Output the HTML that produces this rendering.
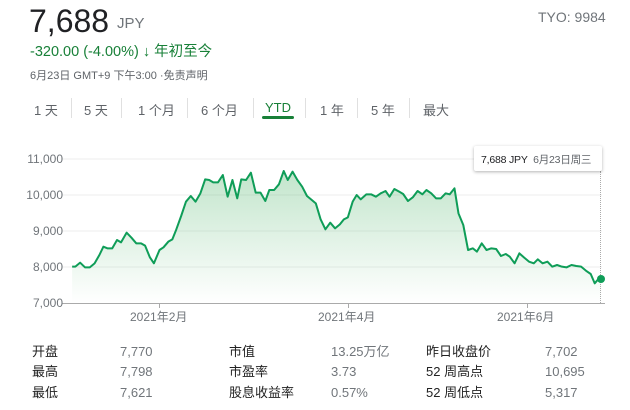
<!DOCTYPE html>
<html><head><meta charset="utf-8"><style>
*{margin:0;padding:0;box-sizing:border-box}
body{width:630px;height:410px;background:#fff;position:relative;overflow:hidden;font-family:"Liberation Sans","Noto Sans CJK SC",sans-serif;color:#222}
.a{position:absolute;white-space:nowrap}
.tab{position:absolute;top:100px;font-size:13px;color:#5f6368}
.div{position:absolute;top:98px;width:1px;height:20px;background:#e0e0e0}
.st,.sv{position:absolute;font-size:13px;line-height:16px;height:16px;white-space:nowrap}
.st{color:#222}
.sv{color:#70757a}
.yl{position:absolute;left:0;width:63px;text-align:right;font-size:12px;line-height:14px;color:#70757a}
</style></head><body>
<div class="a" style="left:29px;top:3px;font-size:32px;color:#202124">7,688</div>
<div class="a" style="left:117px;top:15px;font-size:15px;color:#70757a">JPY</div>
<div class="a" style="left:538px;top:9px;font-size:14px;color:#70757a">TYO: 9984</div>
<div class="a" style="left:30px;top:40px;font-size:14.5px;color:#188038">-320.00 (-4.00%) <span style="font-weight:bold">&#8595;</span> 年初至今</div>
<div class="a" style="left:30px;top:67px;font-size:11px;color:#5f6368">6月23日 GMT+9 下午3:00 ·免责声明</div>
<div class="tab" style="left:34px">1 天</div><div class="div" style="left:71px"></div>
<div class="tab" style="left:84px">5 天</div><div class="div" style="left:121px"></div>
<div class="tab" style="left:138px">1 个月</div><div class="div" style="left:187px"></div>
<div class="tab" style="left:201px">6 个月</div><div class="div" style="left:253px"></div>
<div class="tab" style="left:265px;color:#188038">YTD</div><div class="div" style="left:305px"></div>
<div style="position:absolute;left:262px;top:116px;width:32px;height:3px;border-radius:2px;background:#188038"></div>
<div class="tab" style="left:320px">1 年</div><div class="div" style="left:357px"></div>
<div class="tab" style="left:371px">5 年</div><div class="div" style="left:409px"></div>
<div class="tab" style="left:423px">最大</div>
<svg style="position:absolute;left:0;top:130px" width="630" height="200" viewBox="-2 0 1572 600" preserveAspectRatio="none">
<defs><linearGradient id="g" x1="0" y1="0" x2="0" y2="1"><stop offset="0" stop-color="#34a853" stop-opacity=".3"/><stop offset="1" stop-color="#34a853" stop-opacity="0"/></linearGradient></defs>
<g stroke="#eee" stroke-width="1" vector-effect="non-scaling-stroke"><line x1="150" y1="87" x2="1500" y2="87" vector-effect="non-scaling-stroke"/><line x1="150" y1="195" x2="1500" y2="195" vector-effect="non-scaling-stroke"/><line x1="150" y1="303" x2="1500" y2="303" vector-effect="non-scaling-stroke"/><line x1="150" y1="411" x2="1500" y2="411" vector-effect="non-scaling-stroke"/></g>
<polygon fill="url(#g)" points="178,520 178,410 186,410 198,398 210,412 222,412 234,400 246,375 256,350 266,355 278,355 290,330 300,337 314,308 326,323 338,340 350,340 360,347 372,382 382,400 396,360 406,352 418,335 428,328 438,298 450,258 462,215 474,198 486,215 498,190 510,148 520,150 530,157 542,157 554,135 566,200 578,150 590,205 600,148 612,150 624,128 636,188 648,188 660,213 670,180 682,180 694,163 706,123 716,150 728,125 740,150 752,170 764,198 776,210 786,220 798,268 810,298 822,278 834,295 846,283 856,268 866,262 878,215 888,195 898,208 912,193 924,193 936,200 948,190 960,183 970,200 982,177 994,185 1004,192 1016,213 1028,202 1040,183 1052,193 1062,180 1074,190 1086,205 1098,205 1110,190 1120,193 1132,175 1142,250 1154,285 1166,360 1178,355 1188,365 1200,340 1212,360 1224,355 1236,357 1248,378 1260,372 1270,380 1282,400 1294,370 1306,383 1318,395 1330,400 1340,388 1352,400 1364,395 1376,410 1388,405 1400,410 1412,412 1424,405 1436,408 1448,410 1460,422 1472,432 1482,460 1494,443 1498,447 1498,520"/>
<polyline fill="none" stroke="#0f9d58" stroke-width="2" vector-effect="non-scaling-stroke" stroke-linejoin="round" points="178,410 186,410 198,398 210,412 222,412 234,400 246,375 256,350 266,355 278,355 290,330 300,337 314,308 326,323 338,340 350,340 360,347 372,382 382,400 396,360 406,352 418,335 428,328 438,298 450,258 462,215 474,198 486,215 498,190 510,148 520,150 530,157 542,157 554,135 566,200 578,150 590,205 600,148 612,150 624,128 636,188 648,188 660,213 670,180 682,180 694,163 706,123 716,150 728,125 740,150 752,170 764,198 776,210 786,220 798,268 810,298 822,278 834,295 846,283 856,268 866,262 878,215 888,195 898,208 912,193 924,193 936,200 948,190 960,183 970,200 982,177 994,185 1004,192 1016,213 1028,202 1040,183 1052,193 1062,180 1074,190 1086,205 1098,205 1110,190 1120,193 1132,175 1142,250 1154,285 1166,360 1178,355 1188,365 1200,340 1212,360 1224,355 1236,357 1248,378 1260,372 1270,380 1282,400 1294,370 1306,383 1318,395 1330,400 1340,388 1352,400 1364,395 1376,410 1388,405 1400,410 1412,412 1424,405 1436,408 1448,410 1460,422 1472,432 1482,460 1494,443 1498,447"/>
</svg>
<div style="position:absolute;left:62px;top:303px;width:543px;height:1px;background:#aaa"></div>
<div style="position:absolute;left:159px;top:303px;width:1px;height:5px;background:#aaa"></div>
<div style="position:absolute;left:348px;top:303px;width:1px;height:5px;background:#aaa"></div>
<div style="position:absolute;left:527px;top:303px;width:1px;height:5px;background:#aaa"></div>
<div style="position:absolute;left:600px;top:171px;height:132px;border-left:1px dotted #aaa"></div>
<div style="position:absolute;left:597px;top:275px;width:8px;height:8px;border-radius:50%;background:#0f9d58"></div>
<div class="yl" style="top:152px">11,000</div>
<div class="yl" style="top:188px">10,000</div>
<div class="yl" style="top:224px">9,000</div>
<div class="yl" style="top:260px">8,000</div>
<div class="yl" style="top:296px">7,000</div>
<div class="a" style="left:130px;top:308px;font-size:12px;color:#70757a">2021年2月</div>
<div class="a" style="left:318px;top:308px;font-size:12px;color:#70757a">2021年4月</div>
<div class="a" style="left:497px;top:308px;font-size:12px;color:#70757a">2021年6月</div>
<div style="position:absolute;left:474px;top:146px;width:128px;height:25px;background:#fff;box-shadow:0 1px 3px rgba(0,0,0,.3);border-radius:2px;font-size:10.5px;color:#202124;padding:6px 0 0 7px;white-space:nowrap;letter-spacing:-0.2px">7,688 JPY&nbsp;&nbsp;<span style="color:#5f6368">6月23日周三</span></div>
<div class="st" style="left:32px;top:344px">开盘</div><div class="sv" style="left:120px;top:344px">7,770</div>
<div class="st" style="left:229px;top:344px">市值</div><div class="sv" style="left:331px;top:344px">13.25万亿</div>
<div class="st" style="left:426px;top:344px">昨日收盘价</div><div class="sv" style="left:545px;top:344px">7,702</div>
<div class="st" style="left:32px;top:364px">最高</div><div class="sv" style="left:120px;top:364px">7,798</div>
<div class="st" style="left:229px;top:364px">市盈率</div><div class="sv" style="left:331px;top:364px">3.73</div>
<div class="st" style="left:426px;top:364px">52 周高点</div><div class="sv" style="left:545px;top:364px">10,695</div>
<div class="st" style="left:32px;top:385px">最低</div><div class="sv" style="left:120px;top:385px">7,621</div>
<div class="st" style="left:229px;top:385px">股息收益率</div><div class="sv" style="left:331px;top:385px">0.57%</div>
<div class="st" style="left:426px;top:385px">52 周低点</div><div class="sv" style="left:545px;top:385px">5,317</div>
</body></html>
